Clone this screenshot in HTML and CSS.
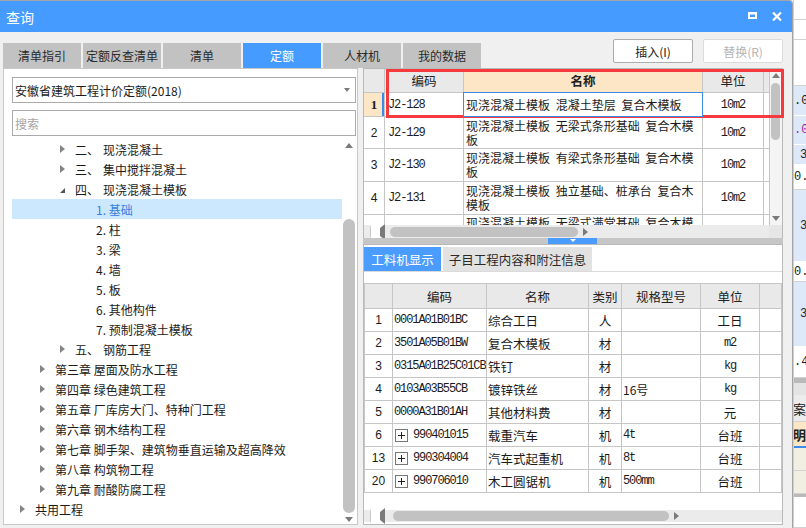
FILE: index.html
```html
<!DOCTYPE html>
<html lang="zh-CN">
<head>
<meta charset="utf-8">
<title>查询</title>
<link rel="stylesheet" href="styles.css">
</head>
<body>
<div class="screen">
  <div class="dialog">
    <div class="titlebar">
      <span class="title">查询</span>
      <svg class="ico-max" width="9" height="7" viewBox="0 0 9 7"><path fill="#fff" fill-rule="evenodd" d="M0 0H9V7H0Z M2 2.5V5H7V2.5Z"/></svg>
      <svg class="ico-close" width="10" height="9" viewBox="0 0 10 9"><path d="M1 0.5L9 8.5M9 0.5L1 8.5" stroke="#fff" stroke-width="2.2" fill="none"/></svg>
    </div>
    <div class="body">
      <div class="toolbar">
        <div class="tabs">
          <div class="tab">清单指引</div>
          <div class="tab">定额反查清单</div>
          <div class="tab">清单</div>
          <div class="tab active">定额</div>
          <div class="tab">人材机</div>
          <div class="tab">我的数据</div>
        </div>
        <div class="buttons">
          <button class="btn">插入(I)</button>
          <button class="btn disabled">替换(R)</button>
        </div>
      </div>
      <div class="main">
        <div class="left">
          <div class="combo"><span class="combo-text">安徽省建筑工程计价定额(2018)</span><span class="combo-arrow"></span></div>
          <div class="search">搜索</div>
          <div class="tree">
            <div class="tree-list">
              <div class="node l2"><span class="tw closed"></span><span class="ord">二、</span>现浇混凝土</div>
              <div class="node l2"><span class="tw closed"></span><span class="ord">三、</span>集中搅拌混凝土</div>
              <div class="node l2"><span class="tw open"></span><span class="ord">四、</span>现浇混凝土模板</div>
              <div class="node l3 selected">1. 基础</div>
              <div class="node l3">2. 柱</div>
              <div class="node l3">3. 梁</div>
              <div class="node l3">4. 墙</div>
              <div class="node l3">5. 板</div>
              <div class="node l3">6. 其他构件</div>
              <div class="node l3">7. 预制混凝土模板</div>
              <div class="node l2"><span class="tw closed"></span><span class="ord">五、</span>钢筋工程</div>
              <div class="node l1"><span class="tw closed"></span>第三章 屋面及防水工程</div>
              <div class="node l1"><span class="tw closed"></span>第四章 绿色建筑工程</div>
              <div class="node l1"><span class="tw closed"></span>第五章 厂库房大门、特种门工程</div>
              <div class="node l1"><span class="tw closed"></span>第六章 钢木结构工程</div>
              <div class="node l1"><span class="tw closed"></span>第七章 脚手架、建筑物垂直运输及超高降效</div>
              <div class="node l1"><span class="tw closed"></span>第八章 构筑物工程</div>
              <div class="node l1"><span class="tw closed"></span>第九章 耐酸防腐工程</div>
              <div class="node l0"><span class="tw closed"></span>共用工程</div>
            </div>
            <div class="vscroll tree-vs">
              <div class="arr-box top"><span class="arr up"></span></div>
              <div class="vtrack"><div class="vthumb tree-thumb"></div></div>
              <div class="arr-box bot"><span class="arr down"></span></div>
            </div>
          </div>
        </div>
        <div class="right">
          <div class="upper">
            <div class="upper-body">
              <div class="ugrid">
                <div class="uh"></div>
                <div class="uh">编码</div>
                <div class="uh hl">名称</div>
                <div class="uh">单位</div>
                <div class="uh"></div>

                <div class="uc num cur">1</div>
                <div class="uc code mono">J2-128</div>
                <div class="uc name sel">现浇混凝土模板 混凝土垫层 复合木模板</div>
                <div class="uc unit mono">10m2</div>
                <div class="uc"></div>

                <div class="uc num">2</div>
                <div class="uc code mono">J2-129</div>
                <div class="uc name">现浇混凝土模板 无梁式条形基础 复合木模板</div>
                <div class="uc unit mono">10m2</div>
                <div class="uc"></div>

                <div class="uc num">3</div>
                <div class="uc code mono">J2-130</div>
                <div class="uc name">现浇混凝土模板 有梁式条形基础 复合木模板</div>
                <div class="uc unit mono">10m2</div>
                <div class="uc"></div>

                <div class="uc num">4</div>
                <div class="uc code mono">J2-131</div>
                <div class="uc name">现浇混凝土模板 独立基础、桩承台 复合木模板</div>
                <div class="uc unit mono">10m2</div>
                <div class="uc"></div>

                <div class="uc num"></div>
                <div class="uc code mono"></div>
                <div class="uc name top">现浇混凝土模板 无梁式满堂基础 复合木模板</div>
                <div class="uc unit mono"></div>
                <div class="uc"></div>
              </div>
              <div class="vscroll up-vs">
                <div class="arr-box top"><span class="arr up"></span></div>
                <div class="vtrack"><div class="vthumb up-thumb"></div></div>
                <div class="arr-box bot"><span class="arr down"></span></div>
              </div>
            </div>
            <div class="hrow">
              <div class="hscroll up-hs">
                <span class="arr left"></span>
                <div class="htrack"><div class="hthumb up-hthumb"></div></div>
                <span class="arr right"></span>
              </div>
              <div class="corner"></div>
            </div>
          </div>
          <div class="splitter"><div class="grip"><span class="grip-arr"></span></div></div>
          <div class="lower">
            <div class="ltabs">
              <div class="ltab active">工料机显示</div>
              <div class="ltab">子目工程内容和附注信息</div>
            </div>
            <div class="lspace"></div>
            <div class="lgrid">
              <div class="lh"></div>
              <div class="lh">编码</div>
              <div class="lh">名称</div>
              <div class="lh">类别</div>
              <div class="lh">规格型号</div>
              <div class="lh">单位</div>
              <div class="lh"></div>

              <div class="lc num">1</div><div class="lc code mono">0001A01B01BC</div><div class="lc name">综合工日</div><div class="lc ctr">人</div><div class="lc spec"></div><div class="lc ctr">工日</div><div class="lc"></div>
              <div class="lc num">2</div><div class="lc code mono">3501A05B01BW</div><div class="lc name">复合木模板</div><div class="lc ctr">材</div><div class="lc spec"></div><div class="lc ctr mono">m2</div><div class="lc"></div>
              <div class="lc num">3</div><div class="lc code mono">0315A01B25C01CB</div><div class="lc name">铁钉</div><div class="lc ctr">材</div><div class="lc spec"></div><div class="lc ctr mono">kg</div><div class="lc"></div>
              <div class="lc num">4</div><div class="lc code mono">0103A03B55CB</div><div class="lc name">镀锌铁丝</div><div class="lc ctr">材</div><div class="lc spec">16号</div><div class="lc ctr mono">kg</div><div class="lc"></div>
              <div class="lc num">5</div><div class="lc code mono">0000A31B01AH</div><div class="lc name">其他材料费</div><div class="lc ctr">材</div><div class="lc spec"></div><div class="lc ctr">元</div><div class="lc"></div>
              <div class="lc num">6</div><div class="lc code mono"><svg class="plus" width="13" height="13" viewBox="0 0 13 13"><rect x="0.5" y="0.5" width="12" height="12" fill="#fff" stroke="#777"/><path d="M3 6.5H10M6.5 3V10" stroke="#222" stroke-width="1"/></svg>990401015</div><div class="lc name">载重汽车</div><div class="lc ctr">机</div><div class="lc spec mono">4t</div><div class="lc ctr">台班</div><div class="lc"></div>
              <div class="lc num">13</div><div class="lc code mono"><svg class="plus" width="13" height="13" viewBox="0 0 13 13"><rect x="0.5" y="0.5" width="12" height="12" fill="#fff" stroke="#777"/><path d="M3 6.5H10M6.5 3V10" stroke="#222" stroke-width="1"/></svg>990304004</div><div class="lc name">汽车式起重机</div><div class="lc ctr">机</div><div class="lc spec mono">8t</div><div class="lc ctr">台班</div><div class="lc"></div>
              <div class="lc num">20</div><div class="lc code mono"><svg class="plus" width="13" height="13" viewBox="0 0 13 13"><rect x="0.5" y="0.5" width="12" height="12" fill="#fff" stroke="#777"/><path d="M3 6.5H10M6.5 3V10" stroke="#222" stroke-width="1"/></svg>990706010</div><div class="lc name">木工圆锯机</div><div class="lc ctr">机</div><div class="lc spec mono">500mm</div><div class="lc ctr">台班</div><div class="lc"></div>
            </div>
            <div class="lblank"></div>
            <div class="hscroll low-hs">
              <span class="arr left"></span>
              <div class="htrack"><div class="hthumb low-hthumb"></div></div>
              <span class="arr right"></span>
            </div>
            <div class="lbottom"></div>
          </div>
        </div>
      </div>
    </div>
  </div>
  <div class="bgapp">
    <div class="bg w h20"></div>
    <div class="bg w h20"></div>
    <div class="bg w h46"></div>
    <div class="bg b h30">.0</div>
    <div class="bg b h29 purple">.0</div>
    <div class="bg b h20 r">3</div>
    <div class="bg w h25">0.</div>
    <div class="bg b h72 r">3</div>
    <div class="bg w h20">0.</div>
    <div class="bg b h65 r">3</div>
    <div class="bg w h31">.4</div>
    <div class="bg grey h5"></div>
    <div class="bg lg h12"></div>
    <div class="bg hd h27 cjk">案</div>
    <div class="bg pe h24 cjk bold">明</div>
    <div class="bg blue h2"></div>
    <div class="bg be h23"></div>
    <div class="bg be h23"></div>
    <div class="bg grey h3"></div>
    <div class="bg w h31"></div>
  </div>
  <div class="annot"></div>
</div>
</body>
</html>
```
FILE: styles.css
```css
* { box-sizing: border-box; }
html, body { margin: 0; padding: 0; }
body {
  width: 806px; height: 528px; overflow: hidden;
  font-family: "Noto Sans CJK SC", "Noto Sans", sans-serif;
  font-size: 12px; color: #1b1b1b; background: #f0f0f0;
}
.screen { position: relative; display: flex; width: 806px; height: 528px; }

/* dialog */
.dialog {
  width: 793px; height: 528px; flex: none;
  display: flex; flex-direction: column;
  background: #f0f0f0;
  border-top: 1px solid #a4a4a4; border-right: 1px solid #a4a4a4;
  border-top-right-radius: 4px; overflow: hidden;
}
.titlebar {
  height: 31px; flex: none; background: #459bff; color: #fff;
  display: flex; align-items: center; padding-left: 6px; padding-right: 10px;
}
.title { font-size: 14px; flex: 1; line-height: 16px; }
.ico-max { margin-top: -3px; margin-right: 15px; }
.ico-close { margin-top: -1px; }

.body { flex: 1; display: flex; flex-direction: column; }
.toolbar { height: 36px; flex: none; display: flex; align-items: flex-start; }
.tabs { display: flex; gap: 2px; margin-top: 11px; margin-left: 3px; }
.tab {
  width: 78px; height: 25px; background: #c2c2c2; color: #2a2a2a;
  display: flex; align-items: center; justify-content: center;
  font-size: 12px;
}
.tab.active { background: #459bff; color: #fff; }
.buttons { margin-left: auto; margin-top: 7px; margin-right: 9px; display: flex; gap: 10px; }
.btn {
  width: 80px; height: 24px; background: #fff; border: 1px solid #adadad; border-radius: 2px;
  font-family: "Noto Sans CJK SC", "Noto Sans", sans-serif; font-size: 12px; color: #222;
  padding: 0; display: flex; align-items: center; justify-content: center;
}
.btn.disabled { border-color: #dcdcdc; color: #b4b4b4; }

.main { height: 457px; flex: none; display: flex; }

/* left */
.left {
  width: 355px; margin-left: 3px; height: 457px; background: #fff;
  border: 1px solid #c8c8c8; padding: 8px 1px 0 8px;
  display: flex; flex-direction: column;
}
.combo {
  height: 26px; flex: none; border: 1px solid #aaaaaa; display: flex; align-items: center;
  padding-left: 2px; padding-right: 5px;
}
.combo-text { flex: 1; color: #1b1b1b; }
.combo-arrow {
  width: 0; height: 0; border-top: 4px solid #7a7a7a;
  border-left: 3.5px solid transparent; border-right: 3.5px solid transparent;
}
.search {
  height: 26px; flex: none; margin-top: 7px; border: 1px solid #aaaaaa;
  display: flex; align-items: center; padding-left: 2px; color: #a6a6a6;
}
.tree { flex: 1; margin-top: 3px; display: flex; min-height: 0; }
.tree-list { flex: 1; padding-top: 0; }
.node { height: 20px; display: flex; align-items: center; white-space: nowrap; color: #1b1b1b; }
.node.l0 { padding-left: 8px; }
.node.l1 { padding-left: 28px; }
.node.l2 { padding-left: 48px; }
.node.l3 { padding-left: 84px; }
.node.selected { background: #cce8ff; color: #3a7ede; }
.tw { width: 15px; height: 20px; flex: none; display: flex; align-items: center; }
.tw.closed::before {
  content: ""; width: 0; height: 0;
  border-left: 5px solid #858585; border-top: 4px solid transparent; border-bottom: 4px solid transparent;
}
.tw.open::before {
  content: ""; width: 0; height: 0; margin-top: 3px;
  border-bottom: 5px solid #555; border-left: 5px solid transparent;
}
.ord { margin-right: 4px; }

/* scrollbars */
.vscroll { width: 14px; flex: none; display: flex; flex-direction: column; }
.arr-box { height: 12px; flex: none; display: flex; align-items: center; justify-content: center; }
.arr-box.bot { height: 10px; }
.arr { width: 0; height: 0; display: block; flex: none; }
.arr.up { border-bottom: 5px solid #7a7a7a; border-left: 4px solid transparent; border-right: 4px solid transparent; }
.arr.down { border-top: 5px solid #7a7a7a; border-left: 4px solid transparent; border-right: 4px solid transparent; }
.arr.left { border-right: 5px solid #7a7a7a; border-top: 4px solid transparent; border-bottom: 4px solid transparent; }
.arr.right { border-left: 5px solid #7a7a7a; border-top: 4px solid transparent; border-bottom: 4px solid transparent; }
.vtrack { flex: 1; min-height: 0; }
.vthumb { background: #c2c2c2; border-radius: 6px; margin: 0 1px; }
.tree-thumb { margin-top: 68px; height: 294px; }

.right { width: 420px; margin-left: 5px; display: flex; flex-direction: column; }

/* upper grid */
.upper { height: 170px; flex: none; border: 1px solid #b9b9b9; border-bottom: none; background: #fff; display: flex; flex-direction: column; }
.upper-body { height: 156px; flex: none; display: flex; overflow: hidden; }
.ugrid {
  width: 405px; flex: none; display: grid; align-content: start;
  grid-template-columns: 20px 78px 238px 60px 5px;
  grid-template-rows: 23px 23px 31px 32px 32px 32px;
  gap: 1px; background: #c6c6c6;
}
.uh { background: #e9e9e9; display: flex; align-items: center; justify-content: center; font-size: 12.5px; color: #222; }
.uh.hl { background: #fde6c6; font-weight: bold; }
.uc { background: #fff; display: flex; align-items: center; min-width: 0; overflow: hidden; }
.uc.num { justify-content: center; font-family: "Liberation Sans", sans-serif; font-size: 12px; }
.uc.num.cur { background: #fde6c6; font-weight: bold; font-family: "Liberation Serif", serif; font-size: 13px; box-shadow: inset -2px 0 0 #3b8be8; }
.uc.code { padding-left: 3px; }
.uc.name { padding-left: 2px; padding-right: 2px; line-height: 14px; word-spacing: 3px; overflow: visible; }
.uc.name.top { align-items: flex-start; padding-top: 1px; }
.uc.name.sel { outline: 1px solid #3b8be8; position: relative; z-index: 1; }
.uc.unit { justify-content: center; }
.mono { font-family: "Liberation Mono", monospace; font-size: 12px; letter-spacing: -1.1px; }

.up-vs { width: 13px; border-left: 1px solid #c6c6c6; background: #f4f4f4; }
.up-vs .arr-box.top { height: 12px; }
.up-vs .vthumb { margin: 2px 1px 0; height: 57px; width: 9px; border-radius: 5px; }
.up-vs .arr-box.bot { height: 14px; }
.hrow { height: 13px; flex: none; display: flex; }
.hscroll { display: flex; align-items: center; background: #ebebeb; }
.htrack { flex: 1; height: 100%; display: flex; align-items: center; }
.hthumb { background: #c2c2c2; border-radius: 5px; height: 10px; flex: none; }
.up-hs { width: 405px; flex: none; padding: 0 6px 0 3px; }
.up-hs .arr.left { margin-right: 5px; }
.up-hthumb { width: 188px; }
.corner { flex: 1; background: #e6e6e6; }

.splitter { height: 6px; flex: none; background: #c6c6c6; padding-left: 185px; display: flex; }
.grip { width: 49px; background: #4a9cff; display: flex; justify-content: center; align-items: flex-start; padding-top: 1px; }
.grip-arr { width: 0; height: 0; border-top: 3px solid #fff; border-left: 3px solid transparent; border-right: 3px solid transparent; }

/* lower */
.lower { height: 281px; flex: none; background: #fff; border: 1px solid #b9b9b9; display: flex; flex-direction: column; padding-top: 2px; }
.ltabs { height: 25px; flex: none; display: flex; gap: 2px; border-bottom: 1px solid #dadada; }
.ltab { height: 24px; padding: 0; display: flex; align-items: center; justify-content: center; background: #e2e2e2; color: #2a2a2a; font-size: 12.5px; }
.ltab:first-child { width: 77px; }
.ltab:last-child { width: 149px; }
.ltab.active { background: #4a9cff; color: #fff; }
.lspace { height: 11px; flex: none; }
.lgrid {
  flex: none; display: grid;
  grid-template-columns: 27px 93px 101px 32px 78px 58px 21px;
  grid-template-rows: 24px; grid-auto-rows: 22px;
  gap: 1px; padding: 1px; background: #c6c6c6;
}
.lh { background: #e9e9e9; display: flex; align-items: center; justify-content: center; font-size: 12.5px; color: #222; }
.lc { background: #fff; display: flex; align-items: center; white-space: nowrap; overflow: hidden; }
.lc.num { justify-content: center; font-family: "Liberation Sans", sans-serif; font-size: 12px; }
.lc.code { padding-left: 1px; }
.lc.name { padding-left: 1px; font-size: 12.5px; }
.lc.ctr { justify-content: center; font-size: 12.5px; }
.lc.ctr.mono { font-size: 12px; }
.lc.spec { padding-left: 1px; }
.plus { flex: none; margin-left: 1px; margin-right: 5px; }
.lblank { flex: 1; }
.low-hs { height: 12px; flex: none; padding: 0 6px 0 3px; }
.low-hs .arr.left { margin-right: 8px; }
.low-hthumb { width: 276px; }
.lbottom { height: 2px; flex: none; }

/* background application strip */
.bgapp {
  flex: 1; display: flex; flex-direction: column; overflow: hidden;
  background: #fff; border-left: 1px solid #d0d0d0;
  font-family: "Liberation Mono", monospace; font-size: 12px; color: #222;
}
.bg { flex: none; display: flex; align-items: center; white-space: nowrap; border-bottom: 1px solid #d2d2d2; padding-left: 0; }
.bg.w { background: #fff; }
.bg.b { background: #dde8f8; border-bottom-color: #fff; }
.bg.r { padding-left: 6px; }
.bg.purple { color: #9a2aa8; }
.bg.grey { background: #b9b9b9; border: none; }
.bg.lg { background: #e4e4e4; border: none; }
.bg.hd { background: #ececec; }
.bg.pe { background: #fde6c6; border: none; }
.bg.blue { background: #3b8be8; border: none; }
.bg.be { background: #f0efe2; }
.cjk { font-family: "Noto Sans CJK SC", sans-serif; font-size: 13px; margin-left: -1px; }
.bold { font-weight: bold; }
.h2 { height: 2px; } .h3 { height: 3px; } .h5 { height: 5px; } .h12 { height: 12px; }
.h20 { height: 20px; } .h23 { height: 23px; } .h24 { height: 24px; } .h25 { height: 25px; }
.h27 { height: 27px; } .h29 { height: 29px; } .h30 { height: 30px; } .h31 { height: 31px; }
.h46 { height: 46px; } .h65 { height: 65px; } .h72 { height: 72px; }

/* annotation overlay */
.annot {
  position: absolute; left: 386px; top: 69px; width: 398px; height: 49px;
  border: 3px solid #f4393f; pointer-events: none;
}
```
